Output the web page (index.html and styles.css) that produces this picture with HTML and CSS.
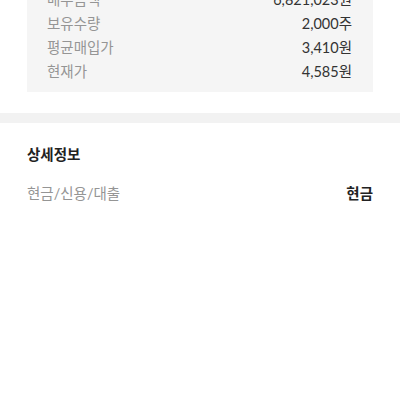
FILE: index.html
```html
<!DOCTYPE html>
<html lang="ko">
<head>
<meta charset="utf-8">
<link rel="stylesheet" href="styles.css">
</head>
<body>
<section class="summary">
  <div class="box">
    <div class="row"><span class="label">매수금액</span><span class="value">6,821,023원</span></div>
    <div class="row"><span class="label">보유수량</span><span class="value">2,000주</span></div>
    <div class="row"><span class="label">평균매입가</span><span class="value">3,410원</span></div>
    <div class="row"><span class="label">현재가</span><span class="value">4,585원</span></div>
  </div>
</section>
<div class="divider"></div>
<section class="detail">
  <h2 class="title">상세정보</h2>
  <div class="drow"><span class="dlabel">현금/신용/대출</span><span class="dvalue">현금</span></div>
</section>
</body>
</html>
```
FILE: styles.css
```css
html, body {
  margin: 0;
  padding: 0;
  background: #fff;
  font-family: Lato, "Noto Sans CJK KR", sans-serif;
}
.summary {
  padding: 0 27px;
  margin-top: -14px;
}
.box {
  background: #f5f5f5;
  padding: 0 21px 10px 20px;
}
.row {
  display: flex;
  justify-content: space-between;
  align-items: center;
  height: 24px;
  font-size: 14.5px;
}
.label { color: #959595; }
.value { color: #333; }
.divider {
  margin-top: 21px;
  height: 10px;
  background: #f2f2f2;
}
.detail {
  padding: 22px 27px 0;
}
.title {
  margin: 0;
  font-size: 14.5px;
  line-height: 20px;
  font-weight: 700;
  color: #222;
}
.drow {
  margin-top: 19px;
  display: flex;
  justify-content: space-between;
  align-items: center;
  line-height: 20px;
  font-size: 14.5px;
}
.dlabel { color: #959595; }
.dvalue { color: #222; font-weight: 700; }
```
